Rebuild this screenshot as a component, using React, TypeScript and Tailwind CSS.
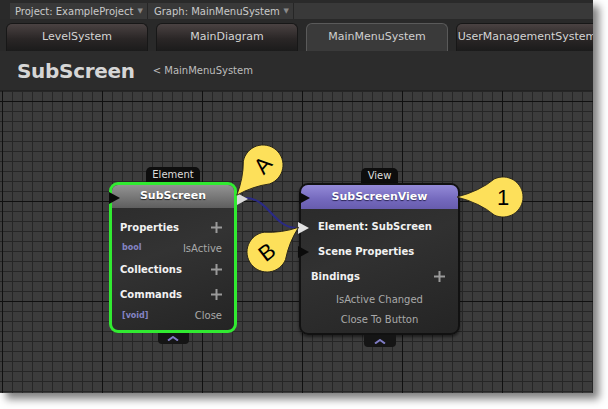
import React from 'react';

const grid =
  "bg-[#3c3c3c] [background-image:linear-gradient(to_right,#101010_1px,transparent_1px),linear-gradient(to_bottom,#101010_1px,transparent_1px),linear-gradient(to_right,#262626_1px,transparent_1px),linear-gradient(to_bottom,#262626_1px,transparent_1px)] [background-size:100px_100px,100px_100px,10px_10px,10px_10px] [background-position:2px_0,0_10px,2px_0,0_0]";

const tabs = ['LevelSystem', 'MainDiagram', 'MainMenuSystem', 'UserManagementSystem'];

function Plus() {
  return (
    <svg width="11" height="11" viewBox="0 0 11 11">
      <rect x="4.5" y="0" width="2" height="11" fill="#9a9a9a" />
      <rect x="0" y="4.5" width="11" height="2" fill="#9a9a9a" />
    </svg>
  );
}

function Chevron() {
  return (
    <svg width="12" height="5" viewBox="0 0 12 5">
      <path d="M1 4.5 L6 1 L11 4.5" stroke="#7f7cc4" strokeWidth="2" fill="none" />
    </svg>
  );
}

function Tri({ color, className }: { color: string; className: string }) {
  return (
    <svg className={`absolute ${className}`} width="11" height="12" viewBox="0 0 11 12">
      <path d="M0 0 L11 6 L0 12 Z" fill={color} />
    </svg>
  );
}

// teardrop callout, tip pointing left before rotation
function Callout({
  className,
  r,
  d,
  rotate,
  label,
  labelRotate,
  size,
}: {
  className: string;
  r: number;
  d: number;
  rotate: number;
  label: string;
  labelRotate: number;
  size: number;
}) {
  const c = -r / d;
  const s = Math.sqrt(1 - c * c);
  const px = r * c;
  const py = r * s;
  const path = `M ${-d} 0 Q ${-r * 1.15} ${-r * 0.3} ${px} ${-py} A ${r} ${r} 0 1 1 ${px} ${py} Q ${-r * 1.15} ${r * 0.3} ${-d} 0 Z`;
  return (
    <svg className={`absolute ${className}`} width="120" height="120" viewBox="-60 -60 120 120">
      <g transform={`rotate(${rotate})`}>
        <path d={path} fill="#fde05a" stroke="#2a2618" strokeWidth="0.9" />
      </g>
      <text
        x="0"
        y="0"
        transform={`rotate(${labelRotate})`}
        textAnchor="middle"
        dominantBaseline="central"
        fontFamily="'Liberation Sans', Arial, sans-serif"
        fontSize={size}
        fill="#000"
      >
        {label}
      </text>
    </svg>
  );
}

export default function App() {
  return (
    <div className="w-[608px] h-[409px] bg-white font-['DejaVu_Sans',sans-serif]">
      <div className="w-[593px] h-[393px] flex flex-col overflow-hidden bg-[#2b2b2b] shadow-[6px_6px_8px_rgba(0,0,0,0.5)]">
        {/* toolbar */}
        <div className="h-[19px] shrink-0 bg-[#2a2a2a] pt-[3px] pl-[10px] flex">
          <div className="flex-1 flex h-[16px] bg-[#393939]">
            <div className="w-[138px] flex items-center justify-between pl-[5px] pr-[4px] border-r border-[#262626] text-[10px] text-[#c9c9c9]">
              <span>Project: ExampleProject</span>
              <span className="text-[7px] text-[#8a8a8a]">▼</span>
            </div>
            <div className="w-[146px] flex items-center justify-between pl-[6px] pr-[4px] border-r border-[#262626] text-[10px] text-[#c9c9c9]">
              <span>Graph: MainMenuSystem</span>
              <span className="text-[7px] text-[#8a8a8a]">▼</span>
            </div>
          </div>
        </div>

        {/* tabs */}
        <div className="h-[32px] shrink-0 bg-[#292929] pt-[4px] pl-[6px] flex gap-[8px]">
          {tabs.map((t) =>
            t === 'MainMenuSystem' ? (
              <div
                key={t}
                className="w-[142px] shrink-0 h-[28px] rounded-t-[6px] border border-b-0 border-[#5a5a5a] bg-[#3a3a3a] flex items-center justify-center text-[11px] text-[#cfcfcf]"
              >
                {t}
              </div>
            ) : (
              <div
                key={t}
                className="w-[142px] shrink-0 h-[28px] rounded-t-[6px] border border-b-0 border-[#171717] bg-[linear-gradient(to_bottom,#4a4242,#2a2626_55%,#1b1b1b)] flex items-center justify-center whitespace-nowrap text-[11px] text-[#d4d4d4]"
              >
                {t}
              </div>
            )
          )}
        </div>

        {/* title */}
        <div className="h-[40px] shrink-0 bg-[#2c2c2c] border-b border-[#222] flex items-center pl-[17px] gap-[18px]">
          <span className="text-[20px] font-bold text-[#d6d6d6] tracking-[-0.3px]">SubScreen</span>
          <span className="text-[10px] text-[#bdbdbd]">&lt; MainMenuSystem</span>
        </div>

        {/* canvas */}
        <div className={`relative flex-1 ${grid}`}>
          {/* wire */}
          <svg className="absolute left-0 top-0" width="593" height="302">
            <path d="M245 107 C 270 107, 272 137, 298 137" stroke="#2a2a86" strokeWidth="2" fill="none" />
          </svg>

          {/* Element node */}
          <div className="absolute left-[109px] top-[76px] w-[128px] flex flex-col items-center">
            <div className="h-[15px] px-[6px] bg-[#0d0d0d] rounded-t-[5px] text-[10px] leading-[15px] text-[#dcdcdc]">
              Element
            </div>
            <div className="w-full h-[151px] rounded-[9px] border-[3px] border-[#31ea31] overflow-hidden flex flex-col bg-[linear-gradient(160deg,#2a2a2a,#333_45%,#242424)]">
              <div className="h-[23px] shrink-0 bg-[linear-gradient(to_bottom,#939393,#5e5e5e)] flex items-center justify-center text-[11px] font-bold text-white [text-shadow:0_1px_1px_#222]">
                SubScreen
              </div>
              <div className="flex flex-col pt-[8px] pl-[8px] pr-[12px] text-[10px]">
                <div className="h-[22px] flex items-center justify-between font-bold text-[#f2f2f2]">
                  <span>Properties</span>
                  <Plus />
                </div>
                <div className="h-[20px] flex items-center justify-between">
                  <span className="text-[8px] font-bold text-[#8484c4] pl-[2px]">bool</span>
                  <span className="text-[#a9a9a9]">IsActive</span>
                </div>
                <div className="h-[22px] flex items-center justify-between font-bold text-[#f2f2f2]">
                  <span>Collections</span>
                  <Plus />
                </div>
                <div className="h-[22px] mt-[3px] flex items-center justify-between font-bold text-[#f2f2f2]">
                  <span>Commands</span>
                  <Plus />
                </div>
                <div className="h-[21px] flex items-center justify-between">
                  <span className="text-[8px] font-bold text-[#8484c4] pl-[2px]">[void]</span>
                  <span className="text-[#a9a9a9]">Close</span>
                </div>
              </div>
            </div>
            <div className="w-[31px] h-[11px] bg-[#151515] rounded-b-[4px] flex items-center justify-center">
              <Chevron />
            </div>
            <Tri color="#0b0b0b" className="left-0 top-[25px]" />
            <Tri color="#d9d9d9" className="left-[128px] top-[26px]" />
          </div>

          {/* View node */}
          <div className="absolute left-[299px] top-[77px] w-[161px] flex flex-col items-center">
            <div className="h-[15px] px-[7px] bg-[#0d0d0d] rounded-t-[5px] text-[10px] leading-[15px] text-[#dcdcdc]">
              View
            </div>
            <div className="w-full h-[152px] rounded-[9px] border-2 border-[#111] overflow-hidden flex flex-col bg-[linear-gradient(160deg,#292929,#313131_45%,#242424)] shadow-[0_2px_3px_rgba(0,0,0,0.5)]">
              <div className="h-[24px] shrink-0 bg-[linear-gradient(to_bottom,#948ad8,#7469bd_60%,#675cae)] flex items-center justify-center text-[11px] font-bold text-white [text-shadow:0_1px_1px_#2a2455]">
                SubScreenView
              </div>
              <div className="flex flex-col pt-[5px] text-[10px]">
                <div className="h-[25px] flex items-center pl-[17px] font-bold text-[#f2f2f2]">Element: SubScreen</div>
                <div className="h-[25px] flex items-center pl-[17px] font-bold text-[#f2f2f2]">Scene Properties</div>
                <div className="h-[25px] flex items-center justify-between pl-[10px] pr-[13px] font-bold text-[#f2f2f2]">
                  <span>Bindings</span>
                  <Plus />
                </div>
                <div className="h-[20px] flex items-center justify-center text-[#a9a9a9]">IsActive Changed</div>
                <div className="h-[20px] flex items-center justify-center text-[#a9a9a9]">Close To Button</div>
              </div>
            </div>
            <div className="w-[32px] h-[12px] bg-[#151515] rounded-b-[4px] flex items-center justify-center">
              <Chevron />
            </div>
            <Tri color="#0b0b0b" className="left-0 top-[24px]" />
            <Tri color="#e2e2e2" className="left-[-1px] top-[54px]" />
            <Tri color="#0b0b0b" className="left-[-1px] top-[78px]" />
          </div>

          {/* callouts */}
          <Callout className="left-[203px] top-[14px]" r={20} d={40} rotate={-49} label="A" labelRotate={-49} size={22} />
          <Callout className="left-[207px] top-[101px]" r={20} d={40} rotate={142} label="B" labelRotate={-38} size={22} />
          <Callout className="left-[443px] top-[46px]" r={20} d={46} rotate={0} label="1" labelRotate={0} size={22} />
        </div>
      </div>
    </div>
  );
}
